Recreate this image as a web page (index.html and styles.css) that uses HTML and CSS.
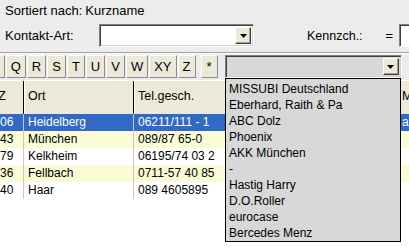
FILE: index.html
```html
<!DOCTYPE html>
<html lang="de">
<head>
  <meta charset="UTF-8" />
  <title>Kontakte</title>
  <link rel="stylesheet" href="styles.css">
</head>

<body>
  <div class="sort-info">Sortiert nach:<span class="sort-key">Kurzname</span></div>

  <div class="filter-row">
    <label class="lbl-art">Kontakt-Art:</label>
    <div class="combo combo-art">
      <span class="combo-text"></span>
      <span class="combo-btn"><svg width="7" height="4" viewBox="0 0 7 4"><polygon points="0,0 7,0 3.5,4" fill="#000"/></svg></span>
    </div>
    <label class="lbl-kz">Kennzch.:</label>
    <span class="eq">=</span>
    <input class="kz-input" type="text">
  </div>

  <div class="etched"></div>

  <div class="letter-bar">
    <button class="letter">P</button>
    <button class="letter">Q</button>
    <button class="letter">R</button>
    <button class="letter">S</button>
    <button class="letter">T</button>
    <button class="letter">U</button>
    <button class="letter">V</button>
    <button class="letter">W</button>
    <button class="letter">XY</button>
    <button class="letter">Z</button>
    <button class="letter star">*</button>
    <div class="combo combo-name">
      <span class="combo-text"></span>
      <span class="combo-btn"><svg width="7" height="4" viewBox="0 0 7 4"><polygon points="0,0 7,0 3.5,4" fill="#000"/></svg></span>
    </div>
  </div>

  <div class="grid">
    <div class="row head">
      <div class="cell">PLZ</div>
      <div class="cell">Ort</div>
      <div class="cell">Tel.gesch.</div>
      <div class="cell">Mobil</div>
    </div>
    <div class="row selected">
      <div class="cell">69106</div>
      <div class="cell">Heidelberg</div>
      <div class="cell">06211/111 - 1</div>
      <div class="cell">aaron@mail.de</div>
    </div>
    <div class="row odd">
      <div class="cell">80343</div>
      <div class="cell">München</div>
      <div class="cell">089/87 65-0</div>
      <div class="cell"></div>
    </div>
    <div class="row">
      <div class="cell">65779</div>
      <div class="cell">Kelkheim</div>
      <div class="cell">06195/74 03 2</div>
      <div class="cell"></div>
    </div>
    <div class="row odd">
      <div class="cell">70736</div>
      <div class="cell">Fellbach</div>
      <div class="cell">0711-57 40 85</div>
      <div class="cell"></div>
    </div>
    <div class="row">
      <div class="cell">85540</div>
      <div class="cell">Haar</div>
      <div class="cell">089 4605895</div>
      <div class="cell"></div>
    </div>
  </div>

  <ul class="drop-list">
    <li>MISSUBI Deutschland</li>
    <li>Eberhard, Raith &amp; Pa</li>
    <li>ABC Dolz</li>
    <li>Phoenix</li>
    <li>AKK München</li>
    <li>-</li>
    <li>Hastig Harry</li>
    <li>D.O.Roller</li>
    <li>eurocase</li>
    <li>Bercedes Menz</li>
  </ul>
</body>
</html>
```

FILE: styles.css
```css
body {
  margin: 0;
  width: 409px;
  height: 247px;
  overflow: hidden;
  position: relative;
  background-color: #ececec;
  font-family: "Liberation Sans", Arial, sans-serif;
  font-size: 13px;
  color: #000;
}

.sort-info {
  box-sizing: border-box;
  height: 24px;
  padding: 3px 0 0 5px;
  line-height: 15px;
}

.sort-key {
  margin-left: 3px;
}

/* Kontakt-Art / Kennzeichen */
.filter-row {
  display: flex;
  align-items: center;
  height: 23px;
  padding-left: 5px;
}

.filter-row > * {
  flex-shrink: 0;
}

.lbl-art {
  width: 94px;
}

.combo {
  box-sizing: border-box;
  flex-shrink: 0;
  display: flex;
  justify-content: flex-end;
  height: 23px;
  padding: 2px;
  background-color: #fff;
  border: 1px solid;
  border-color: #808080 #fff #fff #808080;
  box-shadow: inset 1px 1px #404040, inset -1px -1px #d4d0c8;
}

.combo-art {
  width: 155px;
}

.combo-btn {
  box-sizing: border-box;
  width: 16px;
  display: flex;
  align-items: center;
  justify-content: center;
  background-color: #ece9d8;
  border: 1px solid;
  border-color: #fff #404040 #404040 #fff;
  box-shadow: inset -1px -1px #a0a0a0;
}

.lbl-kz {
  margin-left: 53px;
  font-size: 12.5px;
}

.eq {
  margin-left: 23px;
}

.kz-input {
  box-sizing: border-box;
  margin-left: 6px;
  width: 60px;
  height: 23px;
  border: 1px solid;
  border-color: #808080 #fff #fff #808080;
  box-shadow: inset 1px 1px #404040;
  background-color: #fff;
}

.etched {
  margin-top: 5px;
  border-top: 1px solid #a0a0a0;
  border-bottom: 1px solid #fff;
}

/* Buchstaben-Leiste */
.letter-bar {
  display: flex;
  margin-top: 1px;
  margin-left: -14px;
  height: 23px;
}

.letter {
  box-sizing: border-box;
  flex-shrink: 0;
  height: 23px;
  min-width: 18px;
  padding: 0 4px;
  margin: 0 1px 0 0;
  font-family: "Liberation Sans", Arial, sans-serif;
  font-size: 13px;
  color: #000;
  background-color: #ece9d8;
  border: 1px solid;
  border-color: #fff #8c8c8c #8c8c8c #fff;
}

.letter.star {
  margin-left: 4px;
  width: 17px;
  min-width: 17px;
  padding: 0;
}

.combo-name {
  width: 177px;
  margin-left: 6px;
  background-color: #d8d8d8;
}

/* Tabelle */
.grid {
  margin-top: 2px;
  margin-left: -22px;
  width: 520px;
  height: 200px;
  background-color: #fff;
  font-size: 12px;
}

.row {
  display: grid;
  grid-template-columns: 46px 110px 264px 100px;
  height: 17px;
  line-height: 17px;
}

.cell {
  padding-left: 4px;
  border-right: 1px solid #c8c8c8;
  white-space: nowrap;
  overflow: hidden;
}

.row .cell:first-child {
  padding-left: 2px;
}

.row.head {
  height: 33px;
  line-height: 31px;
  background-color: #ece9d8;
  border-top: 1px solid #fff;
  font-size: 12.5px;
}

.row.head .cell {
  border-right: 1px solid #000;
  box-shadow: inset 1px 0 #fff;
}

.row.head .cell:first-child {
  padding-left: 5px;
}

.row.odd {
  background-color: #fbfbd6;
}

.row.selected {
  background-color: #316ac5;
  color: #fff;
}

/* Aufgeklappte Liste */
.drop-list {
  position: absolute;
  left: 225px;
  top: 78px;
  box-sizing: border-box;
  width: 176px;
  height: 164px;
  margin: 0;
  padding: 2px 0 0 0;
  list-style: none;
  background-color: #d8d8d8;
  border: 1px solid #000;
  font-size: 12px;
}

.drop-list li {
  height: 16px;
  line-height: 16px;
  padding-left: 3px;
  white-space: nowrap;
}
```
